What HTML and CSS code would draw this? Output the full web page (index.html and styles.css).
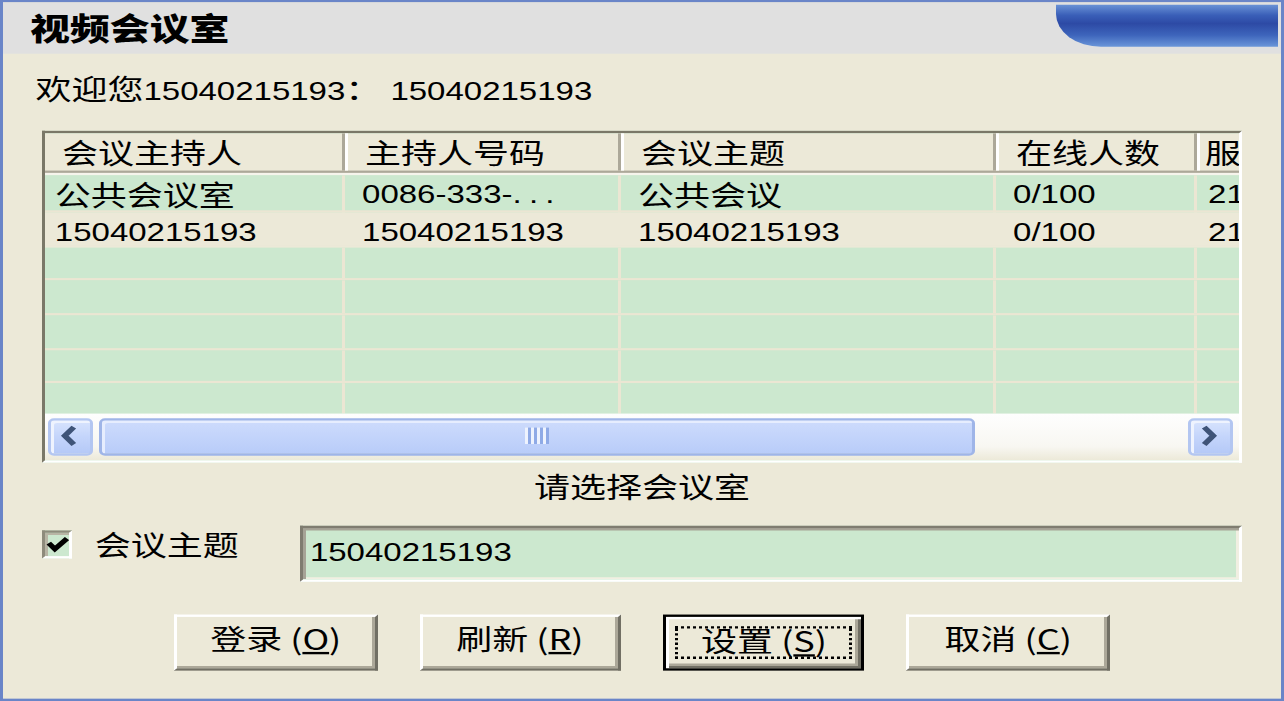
FILE: index.html
```html
<!DOCTYPE html>
<html lang="zh-CN">
<head>
  <meta charset="UTF-8" />
  <title>视频会议室</title>
  <link rel="stylesheet" href="styles.css">
</head>
<body>

  <div class="dlg">
    <div class="dlg-head">
      <h1 class="dlg-title">视频会议室</h1>
      <div class="head-deco"></div>
    </div>

    <p class="welcome">欢迎您<span class="num">15040215193</span>：<span class="num num-after">15040215193</span></p>

    <div class="list">
      <div class="list-head">
        <div class="hcell">会议主持人</div>
        <div class="hcell">主持人号码</div>
        <div class="hcell">会议主题</div>
        <div class="hcell">在线人数</div>
        <div class="hcell">服务器时间</div>
      </div>
      <div class="list-rows">
        <div class="row">
          <div class="cell">公共会议室</div>
          <div class="cell num">0086-333-<span class="dots">...</span></div>
          <div class="cell">公共会议</div>
          <div class="cell num">0/100</div>
          <div class="cell num">21:30</div>
        </div>
        <div class="row sel">
          <div class="cell num">15040215193</div>
          <div class="cell num">15040215193</div>
          <div class="cell num">15040215193</div>
          <div class="cell num">0/100</div>
          <div class="cell num">21:30</div>
        </div>
        <div class="row"><div class="cell"></div><div class="cell"></div><div class="cell"></div><div class="cell"></div><div class="cell"></div></div>
        <div class="row"><div class="cell"></div><div class="cell"></div><div class="cell"></div><div class="cell"></div><div class="cell"></div></div>
        <div class="row"><div class="cell"></div><div class="cell"></div><div class="cell"></div><div class="cell"></div><div class="cell"></div></div>
        <div class="row"><div class="cell"></div><div class="cell"></div><div class="cell"></div><div class="cell"></div><div class="cell"></div></div>
        <div class="row"><div class="cell"></div><div class="cell"></div><div class="cell"></div><div class="cell"></div><div class="cell"></div></div>
      </div>
      <div class="hscroll">
        <span class="sb-btn">
          <svg width="6" height="9" viewBox="0 0 6 9"><path d="M4.6 0.8 L1.6 4.5 L4.6 8.2" fill="none" stroke="#3f5478" stroke-width="2"/></svg>
        </span>
        <span class="sb-thumb"><span class="grip"></span></span>
        <span class="sb-track"></span>
        <span class="sb-btn">
          <svg width="6" height="9" viewBox="0 0 6 9"><path d="M1.4 0.8 L4.4 4.5 L1.4 8.2" fill="none" stroke="#3f5478" stroke-width="2"/></svg>
        </span>
      </div>
    </div>

    <p class="hint">请选择会议室</p>

    <div class="topic">
      <label class="chk">
        <span class="chk-box">
          <svg width="9" height="10" viewBox="0 0 9 10"><path d="M1.3 4.4 L3.4 7 L7.6 2.4" fill="none" stroke="#000" stroke-width="2"/></svg>
        </span>
        会议主题
      </label>
      <div class="field"><span class="num">15040215193</span></div>
    </div>

    <div class="btns">
      <button class="btn">登录 (<u>O</u>)</button>
      <button class="btn">刷新 (<u>R</u>)</button>
      <button class="btn btn-def"><span class="focus">设置 (<u>S</u>)</span></button>
      <button class="btn">取消 (<u>C</u>)</button>
    </div>
  </div>

</body>
</html>
```

FILE: styles.css
```css
* {
  margin: 0;
  padding: 0;
  box-sizing: border-box;
}

html, body {
  width: 1284px;
  height: 701px;
  overflow: hidden;
}

body {
  background-color: #ece9d8;
  color: #000;
  font-family: "Noto Sans CJK SC", sans-serif;
  font-size: 12px;
}

/* digits: narrow latin face, like the half-width ones of the original */
.num {
  font-family: "Liberation Sans", "Noto Sans CJK SC", sans-serif;
  font-size: 11px;
}

.welcome .num,
.field .num {
  line-height: 11px;
}

.num-after {
  margin-left: 3px;
}

.dots {
  letter-spacing: 2.4px;
}

.dlg {
  width: 428px;
  height: 300px;
  transform: scale(3, 2.33667);
  transform-origin: 0 0;
  border: 1px solid #6a85c8;
  background-color: #ece9d8;
}

.dlg-head {
  display: flex;
  justify-content: space-between;
  align-items: flex-start;
  height: 21.5px;
  background-color: #e0e0e0;
}

.dlg-title {
  font-size: 13.3px;
  font-weight: 900;
  line-height: 21.5px;
  padding-left: 9px;
}

.head-deco {
  width: 74.3px;
  height: 18.4px;
  margin: 1.1px 1px 0 0;
  border-bottom-left-radius: 15px 14px;
  background: linear-gradient(180deg, #6a92d6 0%, #3a5fb8 25%, #2d4aa5 45%, #3d64bb 72%, #6a96d9 100%);
}

.welcome {
  margin: 8.4px 0 0 10.8px;
  line-height: 14px;
}

/* list view */
.list {
  width: 400px;
  height: 141.2px;
  margin: 11.6px 0 0 12.7px;
  border: 1px solid;
  border-color: #7a7868 #fff #fff #7a7868;
  background-color: #cce8cf;
  overflow: hidden;
  display: flex;
  flex-direction: column;
}

.list-head,
.row {
  display: grid;
  grid-template-columns: 100px 92px 125px 67px 80px;
  flex-shrink: 0;
}

.list-head {
  height: 16.8px;
  background-color: #ece9d8;
  border-bottom: 1px solid #aca899;
}

.hcell {
  line-height: 15px;
  padding-left: 6px;
  border-left: 1px solid #fff;
  border-right: 1px solid #aca899;
  white-space: nowrap;
}

.hcell:first-child {
  border-left: 0;
}

.hcell:last-child {
  padding-left: 2px;
  border-right: 0;
}

.list-rows {
  height: 102.4px;
  border-top: 1.3px solid #f6f4ec;
  overflow: hidden;
  flex-shrink: 0;
}

.row {
  height: 14.6px;
  background-color: #cce8cf;
  border-bottom: 1px solid #ebe6d3;
}

.row:first-child {
  height: 16px;
}

.row.sel {
  background-color: #ece9d8;
  border-bottom-color: #ece9d8;
}

.cell {
  line-height: 13.6px;
  padding-left: 6px;
  border-right: 1px solid #ebe6d3;
  white-space: nowrap;
}

.cell.num {
  padding-top: 2.2px;
  line-height: 12px;
}

.row:first-child .cell {
  line-height: 15.4px;
}

.row:first-child .cell.num {
  padding-top: 2px;
  line-height: 13px;
}

.row.sel .cell {
  border-right-color: #ece9d8;
}

.cell:first-child {
  padding-left: 3.6px;
}

.cell:last-child {
  padding-left: 4px;
}

/* horizontal scrollbar */
.hscroll {
  display: flex;
  align-items: center;
  height: 20px;
  padding: 0 1.7px 0 1px;
  background: linear-gradient(180deg, #fefefe 0%, #f8f7f2 70%, #ece9d8 100%);
  flex-shrink: 0;
}

.sb-btn {
  display: flex;
  align-items: center;
  justify-content: center;
  width: 15.2px;
  height: 16.3px;
  border: 1px solid #b3c6f1;
  border-radius: 2px;
  background: linear-gradient(180deg, #d7e3fd 0%, #c4d5fb 50%, #b5c9f7 100%);
  box-shadow: inset 1px 1px #eef3fe;
}

.sb-thumb {
  display: flex;
  align-items: center;
  justify-content: center;
  width: 291.7px;
  height: 16.3px;
  margin-left: 2.6px;
  border: 1px solid #9fb5e8;
  border-radius: 2px;
  background: linear-gradient(180deg, #cddbfc 0%, #c3d4fb 50%, #b9ccf9 100%);
  box-shadow: inset 1px 1px #e6edfe;
}

.grip {
  width: 8px;
  height: 7px;
  background: repeating-linear-gradient(90deg, #eef3fe 0 1px, #8faae6 1px 2px);
}

.sb-track {
  flex: 1;
}

.hint {
  margin-top: 3.4px;
  line-height: 14px;
  text-align: center;
}

/* topic row */
.topic {
  display: flex;
  align-items: flex-start;
  margin-top: 10.4px;
  padding: 0 13px 0 12.7px;
}

.chk {
  display: flex;
  align-items: center;
  gap: 7.2px;
  margin-top: 1.3px;
  line-height: 12px;
}

.chk-box {
  display: flex;
  align-items: center;
  justify-content: center;
  width: 10.7px;
  height: 12px;
  border: 1px solid;
  border-color: #8e8b7c #fff #fff #8e8b7c;
  background-color: #cce8cf;
  box-shadow: inset 1px 1px #b8b5a5;
}

.field {
  margin-left: auto;
  width: 314px;
  height: 23.5px;
  border: 1px solid;
  border-color: #7f7c70 #fff #fff #7f7c70;
  box-shadow: inset 1px 1px #a6a396, inset -1px -1px #f1efe2;
  background-color: #cce8cf;
  padding: 1.6px 0 0 2.3px;
  line-height: 14px;
}

/* buttons */
.btns {
  display: flex;
  justify-content: center;
  gap: 14px;
  margin-top: 14.2px;
}

.btn {
  display: flex;
  align-items: center;
  justify-content: center;
  width: 67.4px;
  height: 23.5px;
  padding-bottom: 3px;
  font: inherit;
  line-height: 14px;
  color: #000;
  background-color: #ece9d8;
  border: 1px solid;
  border-color: #fff #716f64 #716f64 #fff;
  box-shadow: inset -1px -1px #aca899;
}

.btn-def {
  border-color: #000;
  box-shadow: inset 1px 1px #fff, inset -1px -1px #716f64, inset -2px -2px #aca899;
  padding: 3.7px 3.1px 4.1px;
  align-items: stretch;
}

.focus {
  display: flex;
  align-items: center;
  justify-content: center;
  flex: 1;
  padding-bottom: 1.5px;
  border: 1px dotted #000;
}
```
